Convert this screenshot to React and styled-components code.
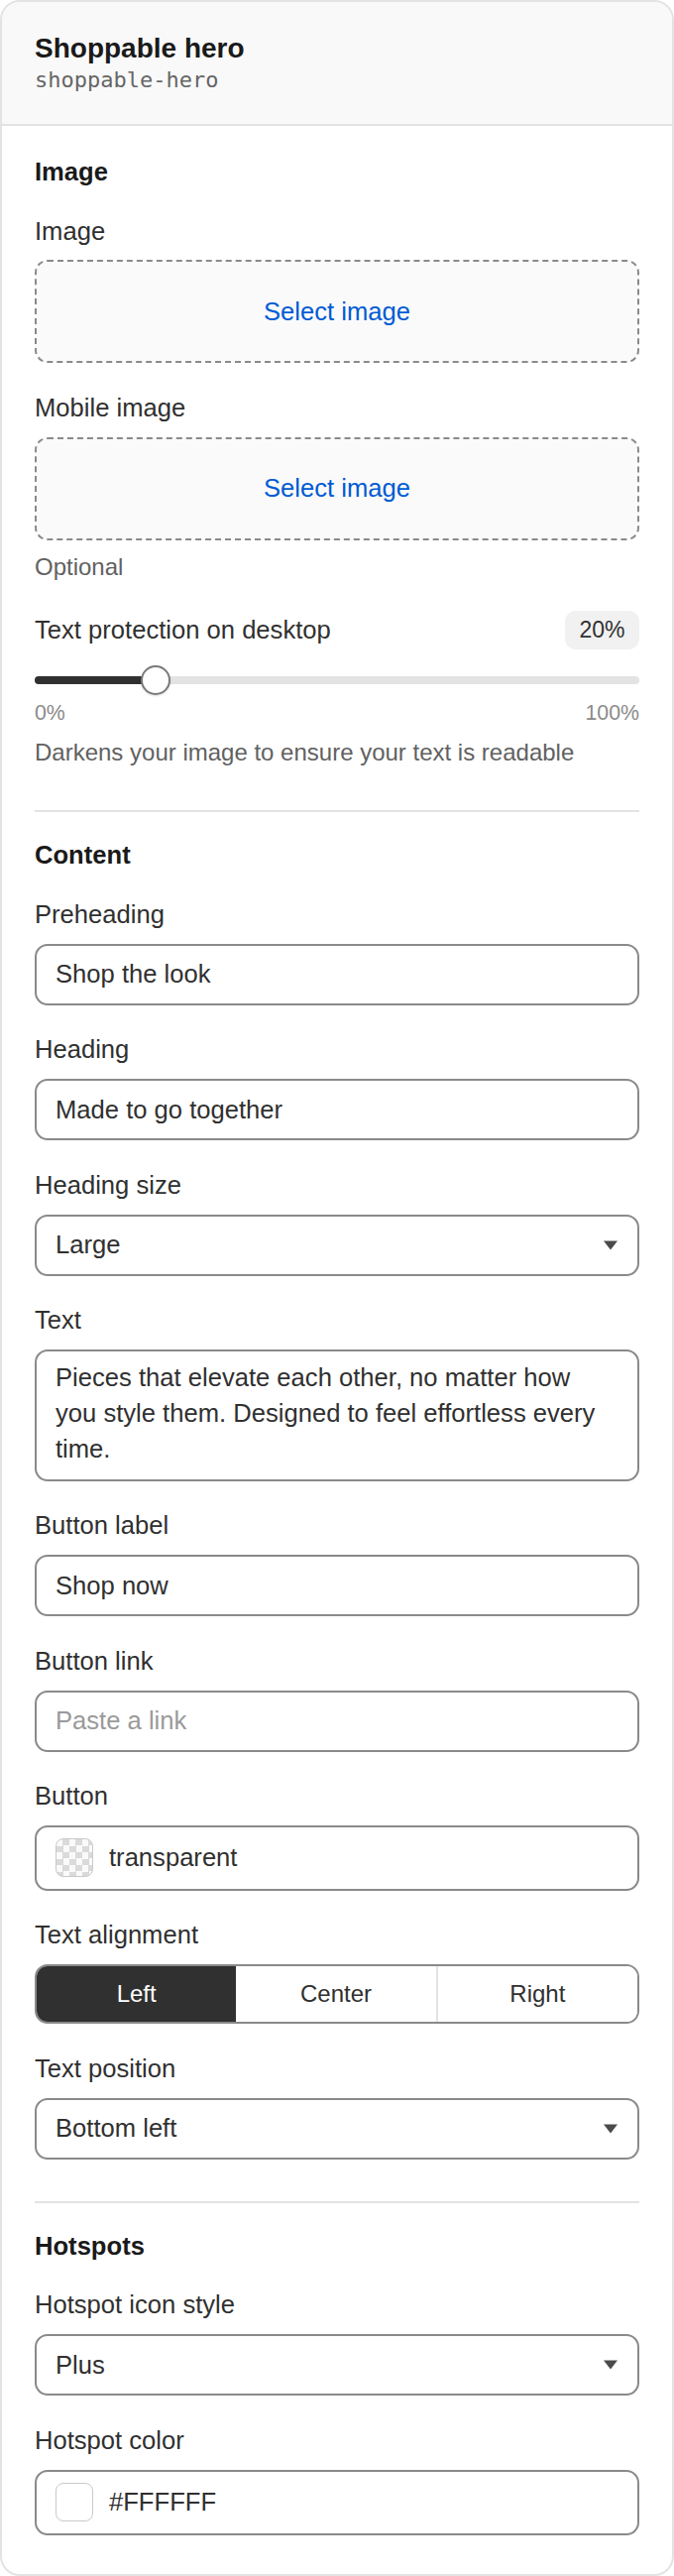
import React from "react";
import styled, { createGlobalStyle } from "styled-components";

const GlobalStyle = createGlobalStyle`
  body {
    margin: 0;
    background: #fff;
    font-family: "Liberation Sans", Arial, sans-serif;
    color: #303030;
  }
  * { box-sizing: border-box; }
`;

const Card = styled.div`
  width: 100%;
  border: 2px solid #e3e3e3;
  border-radius: 20px;
  overflow: hidden;
  background: #fff;
`;

const Header = styled.div`
  padding: 29px 33px 28px;
  background: #f9f9f9;
  border-bottom: 2px solid #e3e3e3;
`;

const Title = styled.h1`
  margin: 0;
  font-size: 28px;
  line-height: 1.25;
  font-weight: 700;
  color: #1a1a1a;
`;

const Handle = styled.div`
  font-family: "DejaVu Sans Mono", monospace;
  font-size: 22px;
  line-height: 1.4;
  color: #666;
`;

const Body = styled.div`
  padding: 29px 33px 39px;
  display: flex;
  flex-direction: column;
`;

const Section = styled.section`
  display: flex;
  flex-direction: column;
`;

const SectionTitle = styled.h2`
  margin: 0 0 24px;
  font-size: 25.6px;
  line-height: 1.4;
  font-weight: 700;
  color: #1a1a1a;
`;

const Fields = styled.div`
  display: flex;
  flex-direction: column;
  gap: 27.5px;
`;

const Divider = styled.hr`
  border: none;
  height: 2px;
  background: #e3e3e3;
  margin: 42px 0 26px;
`;

const Field = styled.div`
  display: flex;
  flex-direction: column;
  gap: 11px;
`;

const Label = styled.label`
  font-size: 25.6px;
  line-height: 1.4;
  color: #303030;
`;

const Help = styled.div`
  font-size: 24px;
  line-height: 1.4;
  color: #616161;
  margin-top: ${(p) => p.$top || 0}px;
`;

const DropZone = styled.button`
  height: 104px;
  width: 100%;
  border: 2px dashed #8a8a8a;
  border-radius: 13px;
  background: #fafafa;
  color: #005bd3;
  font-family: inherit;
  font-size: 25.6px;
  display: flex;
  align-items: center;
  justify-content: center;
`;

const TextInput = styled.input`
  height: 62px;
  width: 100%;
  border: 2px solid #8a8a8a;
  border-radius: 13px;
  padding: 0 19px;
  font-family: inherit;
  font-size: 25.6px;
  color: #303030;
  background: #fff;
  outline: none;
  &::placeholder {
    color: #9a9a9a;
  }
`;

const TextArea = styled.textarea`
  width: 100%;
  height: 133px;
  border: 2px solid #8a8a8a;
  border-radius: 13px;
  padding: 9px 26px 9px 19px;
  font-family: inherit;
  font-size: 25.6px;
  line-height: 1.4;
  color: #303030;
  resize: none;
  overflow: hidden;
  outline: none;
`;

const Select = styled.div`
  height: 62px;
  border: 2px solid #8a8a8a;
  border-radius: 13px;
  padding: 0 20px 0 19px;
  display: flex;
  align-items: center;
  justify-content: space-between;
  font-size: 25.6px;
  color: #303030;
`;

const ColorBox = styled.div`
  height: 66px;
  border: 2px solid #8a8a8a;
  border-radius: 13px;
  padding: 0 19px;
  display: flex;
  align-items: center;
  gap: 16px;
  font-size: 25.6px;
  color: #303030;
`;

const Swatch = styled.span`
  width: 38px;
  height: 39px;
  border-radius: 8px;
  border: 1.5px solid #c9c9c9;
  background: ${(p) =>
    p.$color === "transparent"
      ? "repeating-conic-gradient(#dadada 0 25%, #fafafa 0 50%) 0 0 / 13px 13px"
      : p.$color};
`;

const Segmented = styled.div`
  height: 60px;
  border: 2px solid #8a8a8a;
  border-radius: 13px;
  overflow: hidden;
  display: flex;
`;

const Segment = styled.button`
  flex: 1;
  border: none;
  border-left: ${(p) => (p.$first ? "none" : "2px solid #e3e3e3")};
  background: ${(p) => (p.$active ? "#303030" : "#fff")};
  color: ${(p) => (p.$active ? "#fff" : "#303030")};
  font-family: inherit;
  font-size: 24px;
`;

const LabelRow = styled.div`
  display: flex;
  align-items: center;
  justify-content: space-between;
  height: 40px;
`;

const Badge = styled.span`
  height: 39px;
  padding: 0 14.5px;
  border-radius: 11px;
  background: #f1f1f1;
  font-size: 23px;
  color: #303030;
  display: flex;
  align-items: center;
`;

const SliderWrap = styled.div`
  position: relative;
  height: 32px;
  margin-top: 14px;
  display: flex;
  align-items: center;
`;

const Track = styled.div`
  width: 100%;
  height: 8px;
  border-radius: 4px;
  background: #e3e3e3;
  overflow: hidden;
`;

const Fill = styled.div`
  height: 100%;
  background: #303030;
`;

const Thumb = styled.div`
  position: absolute;
  top: 1px;
  width: 30px;
  height: 30px;
  margin-left: -15px;
  border-radius: 50%;
  background: #fff;
  border: 2px solid #7a7a7a;
  box-shadow: 0 1px 2px rgba(0, 0, 0, 0.15);
`;

const Ticks = styled.div`
  margin-top: 3px;
  display: flex;
  justify-content: space-between;
  font-size: 21.3px;
  line-height: 1.4;
  color: #8a8a8a;
`;

const Caret = () => (
  <svg width="14" height="10" viewBox="0 0 14 10">
    <polygon points="0,0.5 14,0.5 7,9.5" fill="#4a4a4a" />
  </svg>
);

const TextField = ({ label, value, placeholder }) => (
  <Field>
    <Label>{label}</Label>
    <TextInput readOnly defaultValue={value} placeholder={placeholder} />
  </Field>
);

const SelectField = ({ label, value }) => (
  <Field>
    <Label>{label}</Label>
    <Select>
      <span>{value}</span>
      <Caret />
    </Select>
  </Field>
);

const ColorField = ({ label, value }) => (
  <Field>
    <Label>{label}</Label>
    <ColorBox>
      <Swatch $color={value} />
      <span>{value}</span>
    </ColorBox>
  </Field>
);

const App = () => {
  const protection = 20;
  return (
    <>
      <GlobalStyle />
      <Card>
        <Header>
          <Title>Shoppable hero</Title>
          <Handle>shoppable-hero</Handle>
        </Header>
        <Body>
          <Section>
            <SectionTitle>Image</SectionTitle>
            <Fields>
              <Field>
                <Label>Image</Label>
                <DropZone>Select image</DropZone>
              </Field>
              <Field>
                <Label>Mobile image</Label>
                <DropZone>Select image</DropZone>
                <Help $top={-1}>Optional</Help>
              </Field>
              <div>
                <LabelRow>
                  <Label>Text protection on desktop</Label>
                  <Badge>{protection}%</Badge>
                </LabelRow>
                <SliderWrap>
                  <Track>
                    <Fill style={{ width: `${protection}%` }} />
                  </Track>
                  <Thumb style={{ left: `${protection}%` }} />
                </SliderWrap>
                <Ticks>
                  <span>0%</span>
                  <span>100%</span>
                </Ticks>
                <Help $top={7}>Darkens your image to ensure your text is readable</Help>
              </div>
            </Fields>
          </Section>

          <Divider />

          <Section>
            <SectionTitle>Content</SectionTitle>
            <Fields>
              <TextField label="Preheading" value="Shop the look" />
              <TextField label="Heading" value="Made to go together" />
              <SelectField label="Heading size" value="Large" />
              <Field>
                <Label>Text</Label>
                <TextArea
                  readOnly
                  defaultValue="Pieces that elevate each other, no matter how you style them. Designed to feel effortless every time."
                />
              </Field>
              <TextField label="Button label" value="Shop now" />
              <TextField label="Button link" placeholder="Paste a link" />
              <ColorField label="Button" value="transparent" />
              <Field>
                <Label>Text alignment</Label>
                <Segmented>
                  <Segment $first $active>Left</Segment>
                  <Segment $first>Center</Segment>
                  <Segment>Right</Segment>
                </Segmented>
              </Field>
              <SelectField label="Text position" value="Bottom left" />
            </Fields>
          </Section>

          <Divider />

          <Section>
            <SectionTitle>Hotspots</SectionTitle>
            <Fields>
              <SelectField label="Hotspot icon style" value="Plus" />
              <ColorField label="Hotspot color" value="#FFFFFF" />
            </Fields>
          </Section>
        </Body>
      </Card>
    </>
  );
};

export default App;
